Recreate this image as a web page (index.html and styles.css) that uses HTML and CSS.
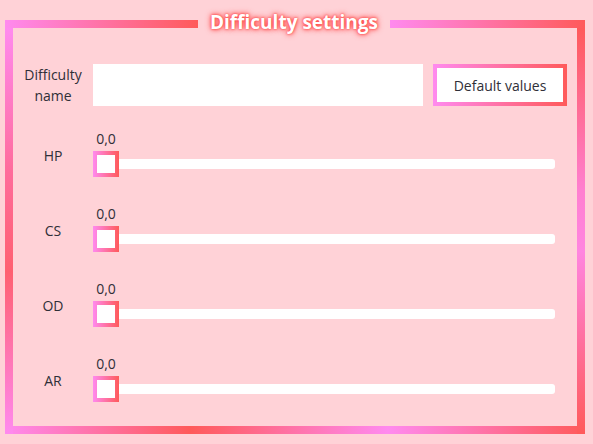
FILE: index.html
```html
<!DOCTYPE html>
<html>
<head>
<meta charset="utf-8">
<link rel="stylesheet" href="styles.css">
</head>
<body>
<div class="frame">
  <div class="frame-top">
    <span class="line line-left"></span>
    <span class="title">Difficulty settings</span>
    <span class="line line-right"></span>
  </div>
  <div class="frame-body">
    <div class="name-row">
      <div class="label">Difficulty<br>name</div>
      <div class="text-input"></div>
      <div class="button">Default values</div>
    </div>
    <div class="slider-row">
      <div class="label slider-label">HP</div>
      <div class="slider-area">
        <div class="value">0,0</div>
        <div class="slider"><div class="track"></div><div class="thumb"></div></div>
      </div>
    </div>
    <div class="slider-row">
      <div class="label slider-label">CS</div>
      <div class="slider-area">
        <div class="value">0,0</div>
        <div class="slider"><div class="track"></div><div class="thumb"></div></div>
      </div>
    </div>
    <div class="slider-row">
      <div class="label slider-label">OD</div>
      <div class="slider-area">
        <div class="value">0,0</div>
        <div class="slider"><div class="track"></div><div class="thumb"></div></div>
      </div>
    </div>
    <div class="slider-row">
      <div class="label slider-label">AR</div>
      <div class="slider-area">
        <div class="value">0,0</div>
        <div class="slider"><div class="track"></div><div class="thumb"></div></div>
      </div>
    </div>
  </div>
</div>
</body>
</html>
```

FILE: styles.css
```css
html, body {
  margin: 0;
  padding: 0;
}
body {
  width: 593px;
  height: 444px;
  background: #ffd2d7;
  font-family: "Open Sans", "Noto Sans", sans-serif;
  font-size: 14px;
  color: #2f2f38;
  overflow: hidden;
}
.frame {
  margin: 20px 0 0 5px;
  width: 580px;
  height: 414px;
  display: flex;
  flex-direction: column;
}
.frame-top {
  display: flex;
  align-items: center;
  height: 8px;
}
.line {
  height: 8px;
  background: linear-gradient(90deg, #ff8aef, #ff5a5a);
}
.line-left {
  width: 193px;
}
.line-right {
  flex: 1;
}
.title {
  width: 192px;
  text-align: center;
  font-weight: 700;
  font-size: 19px;
  line-height: 8px;
  position: relative;
  top: -2px;
  color: #ffffff;
  text-shadow: 0 0 2px #ff4040, 0 0 4px #ff4a4a, 0 0 6px #ff5555;
}
.frame-body {
  flex: 1;
  padding: 0 8px 8px 8px;
  background:
    linear-gradient(180deg, #ff8aef 0%, #ff6c9c 35%, #ff6070 60%, #ff8aef 100%) left top / 8px 100% no-repeat,
    linear-gradient(180deg, #ff5a5a 0%, #ff7fd0 40%, #ff85e0 55%, #ff5a5a 100%) right top / 8px 100% no-repeat,
    linear-gradient(90deg, #ff8aef 0%, #ff5a5a 32%, #ff8aef 66%, #ff5a5a 100%) left bottom / 100% 8px no-repeat;
}
.label {
  width: 80px;
  flex: none;
  text-align: center;
  font-size: 14px;
  line-height: 21px;
}
.name-row {
  display: flex;
  align-items: center;
  margin-top: 36px;
  height: 42px;
}
.text-input {
  width: 330px;
  height: 42px;
  background: #ffffff;
}
.button {
  margin-left: 10px;
  width: 126px;
  height: 34px;
  border: 4px solid transparent;
  background:
    linear-gradient(#ffffff, #ffffff) padding-box,
    linear-gradient(90deg, #ff8aef, #ff5a5a) border-box;
  display: flex;
  align-items: center;
  justify-content: center;
  font-size: 14px;
}
.slider-row {
  display: flex;
  align-items: center;
  height: 49px;
  margin-top: 22px;
}
.slider-row + .slider-row {
  margin-top: 26px;
}
.slider-label {
  padding-top: 6px;
}
.slider-area {
  display: flex;
  flex-direction: column;
}
.value {
  width: 26px;
  text-align: center;
  white-space: nowrap;
  line-height: 22px;
  height: 22px;
  margin-bottom: 1px;
  font-size: 14px;
}
.slider {
  position: relative;
  height: 26px;
  display: flex;
  align-items: center;
}
.track {
  width: 462px;
  height: 10px;
  background: #ffffff;
  border-radius: 0 3px 3px 0;
}
.thumb {
  position: absolute;
  left: 0;
  top: 0;
  width: 18px;
  height: 18px;
  padding: 4px;
  background: linear-gradient(90deg, #ff8aef, #ff5a5a);
}
.thumb::after {
  content: "";
  display: block;
  width: 18px;
  height: 18px;
  background: #ffffff;
}
```
